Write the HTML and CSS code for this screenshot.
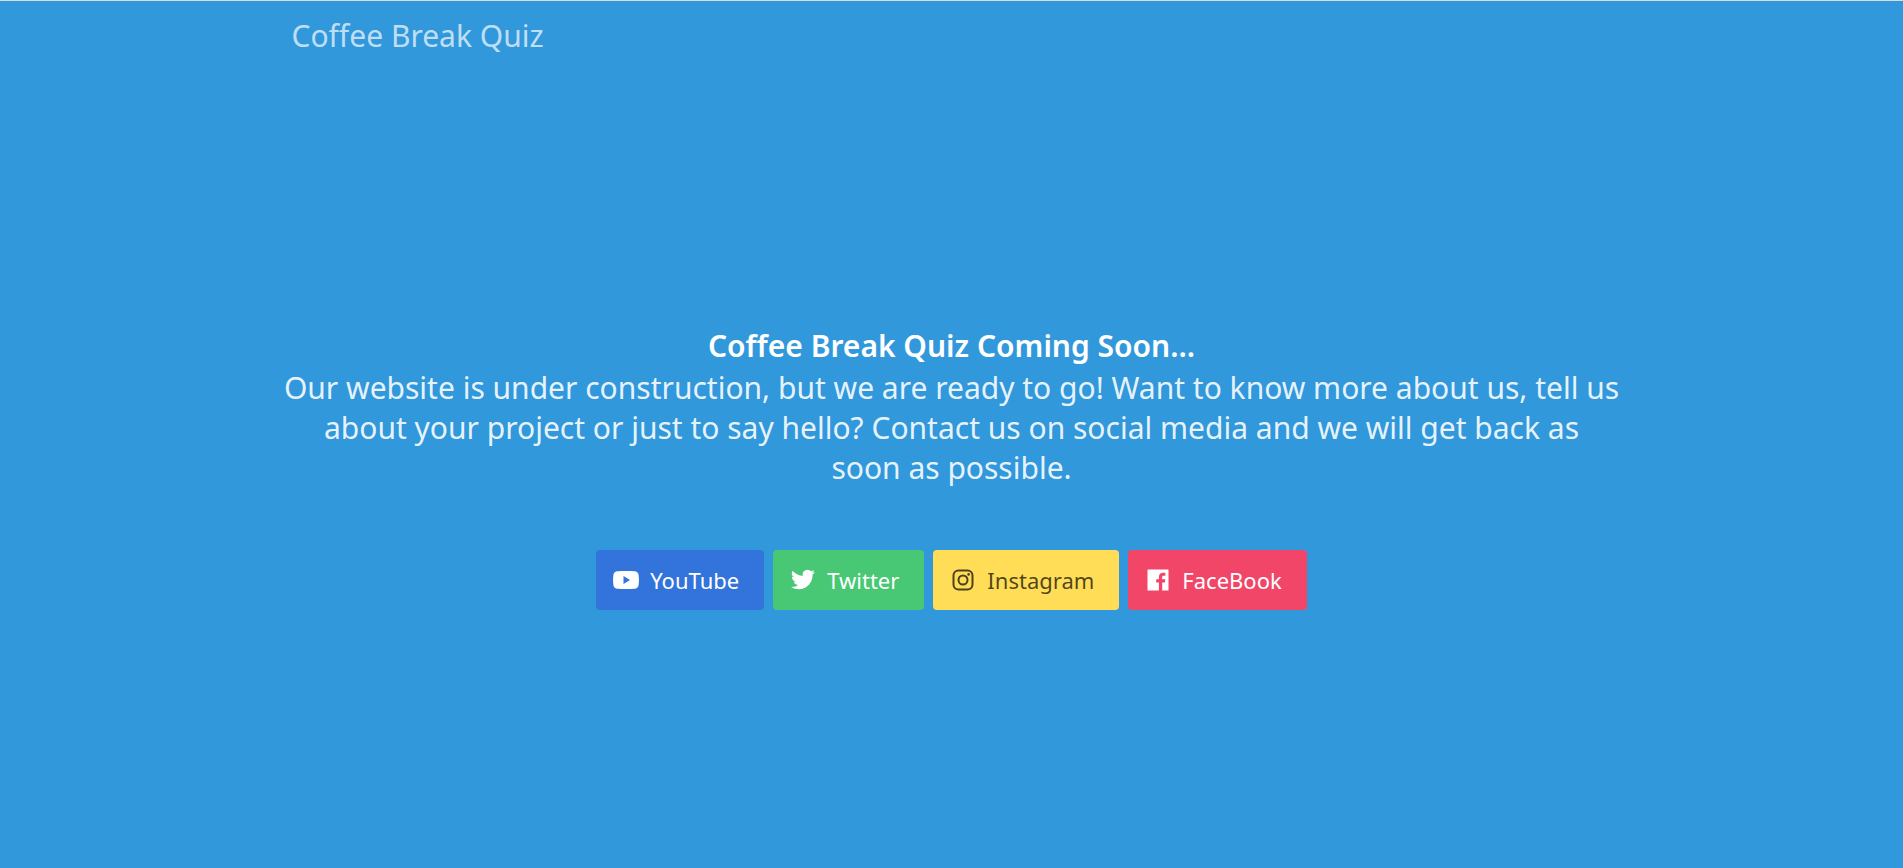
FILE: index.html
```html
<!DOCTYPE html>
<html lang="en">
<head>
<meta charset="utf-8">
<title>Coffee Break Quiz</title>
<link rel="stylesheet" href="styles.css">
</head>
<body>
<section class="hero">
  <header class="hero-head">
    <div class="container">
      <a class="brand" href="#">Coffee Break Quiz</a>
    </div>
  </header>
  <main class="hero-body">
    <div class="container">
      <h1 class="title">Coffee Break Quiz Coming Soon...</h1>
      <p class="subtitle">Our website is under construction, but we are ready to go! Want to know more about us, tell us about your project or just to say hello? Contact us on social media and we will get back as soon&nbsp;as possible.</p>
      <nav class="buttons" aria-label="Social media">
        <a class="button youtube" href="#">
          <svg class="icon" viewBox="0 0 28 28" aria-hidden="true"><path fill="currentColor" fill-rule="evenodd" d="M14 5c3 0 6 .1 8.600.3 2.200.2 3.500 1.300 3.900 3.200.6 3.500.6 7.500 0 11-.4 1.900-1.700 3-3.900 3.200-5 .4-12.200.4-17.200 0-2.200-.2-3.500-1.300-3.900-3.200-.6-3.500-.6-7.500 0-11 .4-1.900 1.700-3 3.900-3.200C8 5.100 11 5 14 5zM11.500 10v8l6.500-4z"/></svg>
          <span>YouTube</span>
        </a>
        <a class="button twitter" href="#">
          <svg class="icon" viewBox="0 0 28 28" aria-hidden="true"><path transform="translate(2 1.500)" fill="currentColor" d="M23.950 4.570a10 10 0 0 1-2.820.77 4.960 4.960 0 0 0 2.160-2.720 9.900 9.900 0 0 1-3.120 1.190 4.920 4.920 0 0 0-8.380 4.480C7.690 8.090 4.070 6.130 1.640 3.160a4.920 4.920 0 0 0 1.520 6.570 4.900 4.900 0 0 1-2.230-.61v.06a4.920 4.920 0 0 0 3.950 4.830 5 5 0 0 1-2.210.08 4.940 4.940 0 0 0 4.600 3.420A9.870 9.870 0 0 1 0 19.540a14 14 0 0 0 7.550 2.210c9.050 0 14-7.500 14-13.980 0-.21 0-.42-.02-.63a9.900 9.900 0 0 0 2.420-2.570z"/></svg>
          <span>Twitter</span>
        </a>
        <a class="button instagram" href="#">
          <svg class="icon" viewBox="0 0 28 28" aria-hidden="true"><g fill="none" stroke="currentColor" stroke-width="2"><rect x="4.500" y="4.500" width="19" height="19" rx="5"/><circle cx="14" cy="14" r="4.500"/></g><circle cx="19.600" cy="8.400" r="1.300" fill="currentColor"/></svg>
          <span>Instagram</span>
        </a>
        <a class="button facebook" href="#">
          <svg class="icon" viewBox="0 0 28 28" aria-hidden="true"><path fill="currentColor" d="M4 3.500h20a.5.500 0 0 1 .5.500v20a.5.500 0 0 1-.5.500h-5.800v-8.100h2.700l.4-3.200h-3.100v-2c0-.9.300-1.500 1.600-1.500h1.600V6.800a22 22 0 0 0-2.400-.1c-2.400 0-4.100 1.500-4.100 4.200v2.300h-2.700v3.200h2.700v8.100H4a.5.500 0 0 1-.5-.5V4a.5.500 0 0 1 .5-.5z"/></svg>
          <span>FaceBook</span>
        </a>
      </nav>
    </div>
  </main>
</section>
</body>
</html>
```
FILE: styles.css
```css
* { box-sizing: border-box; }

body {
  margin: 0;
  font-family: "Noto Sans", "Open Sans", sans-serif;
  color: #fff;
}

.hero {
  min-height: 100vh;
  display: flex;
  flex-direction: column;
  background: #3298dc;
  border-top: 1px solid #dadcdf;
}

.container {
  width: 100%;
  max-width: 1344px;
  margin: 0 auto;
}

.hero-head .container {
  min-height: 70px;
  padding: 0 12px;
  display: flex;
  align-items: center;
}

.brand {
  color: rgba(255, 255, 255, 0.7);
  font-size: 30px;
  line-height: 40px;
  text-decoration: none;
}

.hero-body {
  flex: 1;
  padding-bottom: 4px;
  display: flex;
  align-items: center;
  text-align: center;
}

.title {
  margin: 0 0 2px;
  font-size: 30px;
  line-height: 40px;
  font-weight: 600;
}

.subtitle {
  margin: 0 0 62px;
  font-size: 30px;
  line-height: 40px;
  color: rgba(255, 255, 255, 0.9);
}

.buttons {
  display: flex;
  flex-wrap: wrap;
  justify-content: center;
  gap: 9px;
}

.button {
  height: 60px;
  padding: 0 25px 0 16px;
  display: inline-flex;
  align-items: center;
  gap: 10px;
  border-radius: 4px;
  color: #fff;
  font-size: 22px;
  line-height: 36px;
  text-decoration: none;
}

.icon {
  width: 28px;
  height: 28px;
}

.youtube { background: #3273dc; }
.twitter { background: #48c774; }
.instagram { background: #ffdd57; color: rgba(0, 0, 0, 0.7); }
.facebook { background: #f14668; }
```
